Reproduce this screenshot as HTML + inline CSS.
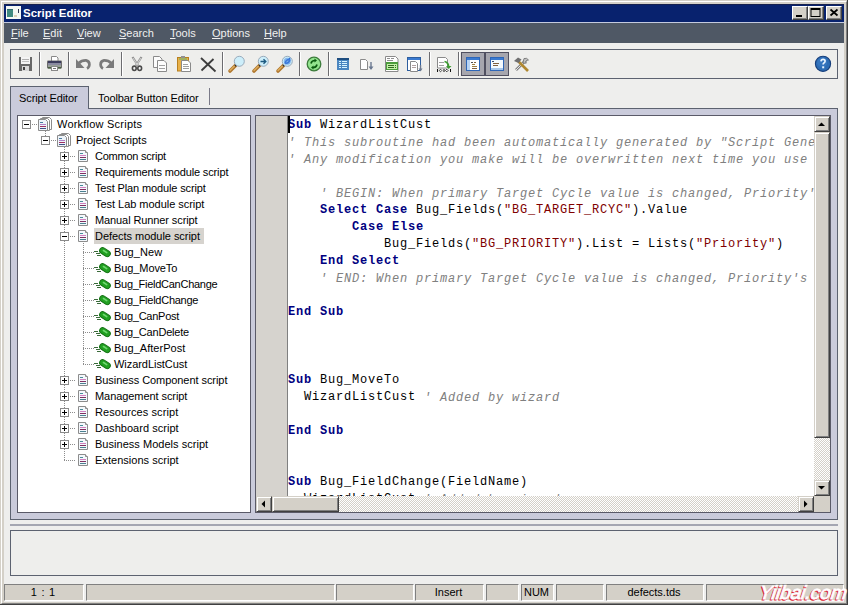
<!DOCTYPE html>
<html><head><meta charset="utf-8">
<style>
*{margin:0;padding:0;box-sizing:border-box}
html,body{width:848px;height:605px;overflow:hidden;background:#d4d0c8;font-family:"Liberation Sans",sans-serif;font-size:11px;color:#000}
.a{position:absolute}
#frame{left:0;top:0;width:848px;height:605px;background:#d4d0c8;border-right:1px solid #404040;border-bottom:1px solid #404040}
#frame2{left:1px;top:1px;width:846px;height:603px;border-top:1px solid #fff;border-left:1px solid #fff;border-right:1px solid #808080;border-bottom:1px solid #808080}
#win{left:4px;top:4px;width:840px;height:598px;background:#eeeeed}
#title{left:4px;top:4px;width:840px;height:18px;background:#08226e;border-top:1px solid #16214f}
#title .t{left:19px;top:2px;color:#fff;font-weight:bold;font-size:11.5px}
.tb{width:16px;height:14px;background:#d4d0c8;border-top:1px solid #fff;border-left:1px solid #fff;border-right:1px solid #404040;border-bottom:1px solid #404040;box-shadow:inset -1px -1px 0 #808080}
#menusep{left:4px;top:22px;width:840px;height:1px;background:#c4cade}
#menu{left:4px;top:23px;width:840px;height:20px;background:#4f5865}
#menu span{position:absolute;top:4px;color:#f0f0f0;font-size:11px;line-height:13px}
#menu u{text-decoration:underline;text-underline-offset:1px;text-decoration-thickness:1px}
#toolbar{left:10px;top:49px;width:828px;height:30px;border:1px solid #5c6270;background:#eeeeec}
.sep{position:absolute;width:2px;height:24px;top:52px;border-left:1px solid #6c6c70;border-right:1px solid #fff}
.pbtn{position:absolute;top:52px;width:24px;height:24px;background:#a6a6ae;border:1px solid #505060}
#tabsel{left:10px;top:86px;width:79px;height:23px;background:#cacbdb;border:1px solid #5c6270;border-bottom:none}
.tabt{position:absolute;font-size:11px;white-space:nowrap;letter-spacing:-0.1px}
#panel{left:10px;top:108px;width:828px;height:412px;background:#cacbdb;border:1px solid #5c6270}
#tree{left:17px;top:115px;width:234px;height:398px;background:#fff;border:1px solid #5a5a68}
#editor{left:255px;top:115px;width:576px;height:398px;background:#fff;border:1px solid #5a5a68}
#gutter{left:256px;top:116px;width:32px;height:380px;background:#d6d3ce;border-right:1px solid #808080}
#caret{left:288px;top:116px;width:2px;height:17px;background:#000}
#code{left:288px;top:117px;width:526px;height:379px;overflow:hidden;font-family:"Liberation Mono",monospace;font-size:12px;letter-spacing:0.8px;line-height:17px;white-space:pre;color:#000}
.k{color:#000080;font-weight:bold}
.c{color:#808080;font-style:italic;position:relative;top:1px}
.s{color:#800000}
.chk{background-color:#fff;background-image:linear-gradient(45deg,#d4d0c8 25%,transparent 25%,transparent 75%,#d4d0c8 75%),linear-gradient(45deg,#d4d0c8 25%,transparent 25%,transparent 75%,#d4d0c8 75%);background-size:2px 2px;background-position:0 0,1px 1px}
.btn3{position:absolute;background:#d4d0c8;border-top:1px solid #d4d0c8;border-left:1px solid #d4d0c8;border-right:1px solid #404040;border-bottom:1px solid #404040;box-shadow:inset 1px 1px 0 #fff,inset -1px -1px 0 #808080}
#split{left:10px;top:524px;width:828px;height:2px;background:#a4a6b2}
#output{left:10px;top:530px;width:828px;height:46px;background:#eeeeec;border:1px solid #5c6270}
.sp{position:absolute;top:584px;height:17px;background:#d4d0c8;border-top:1px solid #808080;border-left:1px solid #808080;border-right:1px solid #fff;border-bottom:1px solid #fff;text-align:center;font-size:11px;line-height:15px;padding-right:2px}
.row{position:absolute;height:16px;line-height:16px;font-size:11px;white-space:nowrap;letter-spacing:-0.2px}
.wm{font-size:19px;font-style:italic;white-space:nowrap;transform:skewX(-8deg);transform-origin:0 100%}
</style></head><body>
<div id="frame" class="a"></div>
<div id="frame2" class="a"></div>
<div id="win" class="a"></div>
<div id="title" class="a"><span class="a t">Script Editor</span></div>
<div class="a tb" style="left:792px;top:6px"></div>
<div class="a tb" style="left:808px;top:6px"></div>
<div class="a tb" style="left:826px;top:6px"></div>
<div id="menusep" class="a"></div>
<div id="menu" class="a">
<span style="left:7px"><u>F</u>ile</span>
<span style="left:39px"><u>E</u>dit</span>
<span style="left:73px"><u>V</u>iew</span>
<span style="left:115px"><u>S</u>earch</span>
<span style="left:166px"><u>T</u>ools</span>
<span style="left:208px"><u>O</u>ptions</span>
<span style="left:260px"><u>H</u>elp</span>
</div>
<div id="toolbar" class="a"></div>
<div class="sep" style="left:39px"></div>
<div class="sep" style="left:68px"></div>
<div class="sep" style="left:121px"></div>
<div class="sep" style="left:222px"></div>
<div class="sep" style="left:299px"></div>
<div class="sep" style="left:328px"></div>
<div class="sep" style="left:429px"></div>
<div class="sep" style="left:458px"></div>
<div class="pbtn" style="left:461px"></div>
<div class="pbtn" style="left:485px"></div>
<div id="panel" class="a"></div>
<div id="tabsel" class="a"></div>
<div class="tabt" style="left:19px;top:92px">Script Editor</div>
<div class="tabt" style="left:98px;top:92px">Toolbar Button Editor</div>
<div class="a" style="left:209px;top:88px;width:1px;height:17px;background:#7a7a88"></div>
<div id="tree" class="a"></div>
<div id="editor" class="a"></div>
<div id="gutter" class="a"></div>
<div id="code" class="a"><span class="k">Sub</span> WizardListCust
<span class="c">' This subroutine had been automatically generated by "Script Generator"</span>
<span class="c">' Any modification you make will be overwritten next time you use the wizard</span>

    <span class="c">' BEGIN: When primary Target Cycle value is changed, Priority's list is changed</span>
    <span class="k">Select Case</span> Bug_Fields(<span class="s">"BG_TARGET_RCYC"</span>).Value
        <span class="k">Case Else</span>
            Bug_Fields(<span class="s">"BG_PRIORITY"</span>).List = Lists(<span class="s">"Priority"</span>)
    <span class="k">End Select</span>
    <span class="c">' END: When primary Target Cycle value is changed, Priority's list is changed</span>

<span class="k">End Sub</span>



<span class="k">Sub</span> Bug_MoveTo
  WizardListCust <span class="c">' Added by wizard</span>

<span class="k">End Sub</span>


<span class="k">Sub</span> Bug_FieldChange(FieldName)
  WizardListCust <span class="c">' Added by wizard</span>
</div>
<div id="caret" class="a"></div>
<div class="a chk" style="left:814px;top:132px;width:16px;height:348px"></div>
<div class="btn3" style="left:814px;top:116px;width:16px;height:16px"></div>
<div class="btn3" style="left:814px;top:132px;width:16px;height:306px"></div>
<div class="btn3" style="left:814px;top:480px;width:16px;height:16px"></div>
<div class="a chk" style="left:256px;top:496px;width:558px;height:16px"></div>
<div class="btn3" style="left:256px;top:496px;width:16px;height:16px"></div>
<div class="btn3" style="left:272px;top:496px;width:67px;height:16px"></div>
<div class="btn3" style="left:798px;top:496px;width:16px;height:16px"></div>
<div class="a" style="left:814px;top:496px;width:16px;height:16px;background:#d4d0c8"></div>
<div id="split" class="a"></div>
<div id="output" class="a"></div>
<div class="sp" style="left:4px;width:80px"><span style="word-spacing:1.5px">1 : 1</span></div>
<div class="sp" style="left:86px;width:249px"></div>
<div class="sp" style="left:336px;width:78px"></div>
<div class="sp" style="left:415px;width:69px">Insert</div>
<div class="sp" style="left:486px;width:33px"></div>
<div class="sp" style="left:521px;width:33px">NUM</div>
<div class="sp" style="left:556px;width:48px"></div>
<div class="sp" style="left:606px;width:98px">defects.tds</div>
<div class="sp" style="left:706px;width:138px"></div>
<div class="a wm" style="left:757px;top:583px;color:#e02838;-webkit-text-stroke:1px #e02838">Yiibai.com</div>
<div class="a wm" style="left:758px;top:582px;color:#fff;-webkit-text-stroke:0.8px #fff">Yiibai.com</div>
<div class="row" style="left:57px;top:116px;letter-spacing:0.22px">Workflow Scripts</div>
<div class="row" style="left:76px;top:132px;letter-spacing:-0.02px">Project Scripts</div>
<div class="row" style="left:95px;top:148px;letter-spacing:-0.24px">Common script</div>
<div class="row" style="left:95px;top:164px;letter-spacing:-0.14px">Requirements module script</div>
<div class="row" style="left:95px;top:180px;letter-spacing:-0.13px">Test Plan module script</div>
<div class="row" style="left:95px;top:196px;letter-spacing:-0.03px">Test Lab module script</div>
<div class="row" style="left:95px;top:212px;letter-spacing:-0.10px">Manual Runner script</div>
<div class="a" style="left:94px;top:228px;width:110px;height:16px;background:#d6d3ce"></div>
<div class="row" style="left:95px;top:228px;letter-spacing:-0.04px">Defects module script</div>
<div class="row" style="left:114px;top:244px;letter-spacing:0.07px">Bug_New</div>
<div class="row" style="left:114px;top:260px;letter-spacing:-0.09px">Bug_MoveTo</div>
<div class="row" style="left:114px;top:276px;letter-spacing:-0.27px">Bug_FieldCanChange</div>
<div class="row" style="left:114px;top:292px;letter-spacing:-0.26px">Bug_FieldChange</div>
<div class="row" style="left:114px;top:308px;letter-spacing:-0.26px">Bug_CanPost</div>
<div class="row" style="left:114px;top:324px;letter-spacing:-0.21px">Bug_CanDelete</div>
<div class="row" style="left:114px;top:340px;letter-spacing:0.03px">Bug_AfterPost</div>
<div class="row" style="left:114px;top:356px;letter-spacing:-0.05px">WizardListCust</div>
<div class="row" style="left:95px;top:372px;letter-spacing:-0.06px">Business Component script</div>
<div class="row" style="left:95px;top:388px;letter-spacing:-0.07px">Management script</div>
<div class="row" style="left:95px;top:404px;letter-spacing:0.09px">Resources script</div>
<div class="row" style="left:95px;top:420px;letter-spacing:0.03px">Dashboard script</div>
<div class="row" style="left:95px;top:436px;letter-spacing:0.03px">Business Models script</div>
<div class="row" style="left:95px;top:452px;letter-spacing:0.03px">Extensions script</div>
<svg class="a" style="left:0;top:0" width="848" height="605" viewBox="0 0 848 605"><rect x="45" y="131" width="1" height="1" fill="#8c8c8c"/><rect x="45" y="133" width="1" height="1" fill="#8c8c8c"/><rect x="45" y="135" width="1" height="1" fill="#8c8c8c"/><rect x="64" y="147" width="1" height="1" fill="#8c8c8c"/><rect x="64" y="149" width="1" height="1" fill="#8c8c8c"/><rect x="64" y="151" width="1" height="1" fill="#8c8c8c"/><rect x="64" y="153" width="1" height="1" fill="#8c8c8c"/><rect x="64" y="155" width="1" height="1" fill="#8c8c8c"/><rect x="64" y="157" width="1" height="1" fill="#8c8c8c"/><rect x="64" y="159" width="1" height="1" fill="#8c8c8c"/><rect x="64" y="161" width="1" height="1" fill="#8c8c8c"/><rect x="64" y="163" width="1" height="1" fill="#8c8c8c"/><rect x="64" y="165" width="1" height="1" fill="#8c8c8c"/><rect x="64" y="167" width="1" height="1" fill="#8c8c8c"/><rect x="64" y="169" width="1" height="1" fill="#8c8c8c"/><rect x="64" y="171" width="1" height="1" fill="#8c8c8c"/><rect x="64" y="173" width="1" height="1" fill="#8c8c8c"/><rect x="64" y="175" width="1" height="1" fill="#8c8c8c"/><rect x="64" y="177" width="1" height="1" fill="#8c8c8c"/><rect x="64" y="179" width="1" height="1" fill="#8c8c8c"/><rect x="64" y="181" width="1" height="1" fill="#8c8c8c"/><rect x="64" y="183" width="1" height="1" fill="#8c8c8c"/><rect x="64" y="185" width="1" height="1" fill="#8c8c8c"/><rect x="64" y="187" width="1" height="1" fill="#8c8c8c"/><rect x="64" y="189" width="1" height="1" fill="#8c8c8c"/><rect x="64" y="191" width="1" height="1" fill="#8c8c8c"/><rect x="64" y="193" width="1" height="1" fill="#8c8c8c"/><rect x="64" y="195" width="1" height="1" fill="#8c8c8c"/><rect x="64" y="197" width="1" height="1" fill="#8c8c8c"/><rect x="64" y="199" width="1" height="1" fill="#8c8c8c"/><rect x="64" y="201" width="1" height="1" fill="#8c8c8c"/><rect x="64" y="203" width="1" height="1" fill="#8c8c8c"/><rect x="64" y="205" width="1" height="1" fill="#8c8c8c"/><rect x="64" y="207" width="1" height="1" fill="#8c8c8c"/><rect x="64" y="209" width="1" height="1" fill="#8c8c8c"/><rect x="64" y="211" width="1" height="1" fill="#8c8c8c"/><rect x="64" y="213" width="1" height="1" fill="#8c8c8c"/><rect x="64" y="215" width="1" height="1" fill="#8c8c8c"/><rect x="64" y="217" width="1" height="1" fill="#8c8c8c"/><rect x="64" y="219" width="1" height="1" fill="#8c8c8c"/><rect x="64" y="221" width="1" height="1" fill="#8c8c8c"/><rect x="64" y="223" width="1" height="1" fill="#8c8c8c"/><rect x="64" y="225" width="1" height="1" fill="#8c8c8c"/><rect x="64" y="227" width="1" height="1" fill="#8c8c8c"/><rect x="64" y="229" width="1" height="1" fill="#8c8c8c"/><rect x="64" y="231" width="1" height="1" fill="#8c8c8c"/><rect x="64" y="233" width="1" height="1" fill="#8c8c8c"/><rect x="64" y="235" width="1" height="1" fill="#8c8c8c"/><rect x="64" y="237" width="1" height="1" fill="#8c8c8c"/><rect x="64" y="239" width="1" height="1" fill="#8c8c8c"/><rect x="64" y="241" width="1" height="1" fill="#8c8c8c"/><rect x="64" y="243" width="1" height="1" fill="#8c8c8c"/><rect x="64" y="245" width="1" height="1" fill="#8c8c8c"/><rect x="64" y="247" width="1" height="1" fill="#8c8c8c"/><rect x="64" y="249" width="1" height="1" fill="#8c8c8c"/><rect x="64" y="251" width="1" height="1" fill="#8c8c8c"/><rect x="64" y="253" width="1" height="1" fill="#8c8c8c"/><rect x="64" y="255" width="1" height="1" fill="#8c8c8c"/><rect x="64" y="257" width="1" height="1" fill="#8c8c8c"/><rect x="64" y="259" width="1" height="1" fill="#8c8c8c"/><rect x="64" y="261" width="1" height="1" fill="#8c8c8c"/><rect x="64" y="263" width="1" height="1" fill="#8c8c8c"/><rect x="64" y="265" width="1" height="1" fill="#8c8c8c"/><rect x="64" y="267" width="1" height="1" fill="#8c8c8c"/><rect x="64" y="269" width="1" height="1" fill="#8c8c8c"/><rect x="64" y="271" width="1" height="1" fill="#8c8c8c"/><rect x="64" y="273" width="1" height="1" fill="#8c8c8c"/><rect x="64" y="275" width="1" height="1" fill="#8c8c8c"/><rect x="64" y="277" width="1" height="1" fill="#8c8c8c"/><rect x="64" y="279" width="1" height="1" fill="#8c8c8c"/><rect x="64" y="281" width="1" height="1" fill="#8c8c8c"/><rect x="64" y="283" width="1" height="1" fill="#8c8c8c"/><rect x="64" y="285" width="1" height="1" fill="#8c8c8c"/><rect x="64" y="287" width="1" height="1" fill="#8c8c8c"/><rect x="64" y="289" width="1" height="1" fill="#8c8c8c"/><rect x="64" y="291" width="1" height="1" fill="#8c8c8c"/><rect x="64" y="293" width="1" height="1" fill="#8c8c8c"/><rect x="64" y="295" width="1" height="1" fill="#8c8c8c"/><rect x="64" y="297" width="1" height="1" fill="#8c8c8c"/><rect x="64" y="299" width="1" height="1" fill="#8c8c8c"/><rect x="64" y="301" width="1" height="1" fill="#8c8c8c"/><rect x="64" y="303" width="1" height="1" fill="#8c8c8c"/><rect x="64" y="305" width="1" height="1" fill="#8c8c8c"/><rect x="64" y="307" width="1" height="1" fill="#8c8c8c"/><rect x="64" y="309" width="1" height="1" fill="#8c8c8c"/><rect x="64" y="311" width="1" height="1" fill="#8c8c8c"/><rect x="64" y="313" width="1" height="1" fill="#8c8c8c"/><rect x="64" y="315" width="1" height="1" fill="#8c8c8c"/><rect x="64" y="317" width="1" height="1" fill="#8c8c8c"/><rect x="64" y="319" width="1" height="1" fill="#8c8c8c"/><rect x="64" y="321" width="1" height="1" fill="#8c8c8c"/><rect x="64" y="323" width="1" height="1" fill="#8c8c8c"/><rect x="64" y="325" width="1" height="1" fill="#8c8c8c"/><rect x="64" y="327" width="1" height="1" fill="#8c8c8c"/><rect x="64" y="329" width="1" height="1" fill="#8c8c8c"/><rect x="64" y="331" width="1" height="1" fill="#8c8c8c"/><rect x="64" y="333" width="1" height="1" fill="#8c8c8c"/><rect x="64" y="335" width="1" height="1" fill="#8c8c8c"/><rect x="64" y="337" width="1" height="1" fill="#8c8c8c"/><rect x="64" y="339" width="1" height="1" fill="#8c8c8c"/><rect x="64" y="341" width="1" height="1" fill="#8c8c8c"/><rect x="64" y="343" width="1" height="1" fill="#8c8c8c"/><rect x="64" y="345" width="1" height="1" fill="#8c8c8c"/><rect x="64" y="347" width="1" height="1" fill="#8c8c8c"/><rect x="64" y="349" width="1" height="1" fill="#8c8c8c"/><rect x="64" y="351" width="1" height="1" fill="#8c8c8c"/><rect x="64" y="353" width="1" height="1" fill="#8c8c8c"/><rect x="64" y="355" width="1" height="1" fill="#8c8c8c"/><rect x="64" y="357" width="1" height="1" fill="#8c8c8c"/><rect x="64" y="359" width="1" height="1" fill="#8c8c8c"/><rect x="64" y="361" width="1" height="1" fill="#8c8c8c"/><rect x="64" y="363" width="1" height="1" fill="#8c8c8c"/><rect x="64" y="365" width="1" height="1" fill="#8c8c8c"/><rect x="64" y="367" width="1" height="1" fill="#8c8c8c"/><rect x="64" y="369" width="1" height="1" fill="#8c8c8c"/><rect x="64" y="371" width="1" height="1" fill="#8c8c8c"/><rect x="64" y="373" width="1" height="1" fill="#8c8c8c"/><rect x="64" y="375" width="1" height="1" fill="#8c8c8c"/><rect x="64" y="377" width="1" height="1" fill="#8c8c8c"/><rect x="64" y="379" width="1" height="1" fill="#8c8c8c"/><rect x="64" y="381" width="1" height="1" fill="#8c8c8c"/><rect x="64" y="383" width="1" height="1" fill="#8c8c8c"/><rect x="64" y="385" width="1" height="1" fill="#8c8c8c"/><rect x="64" y="387" width="1" height="1" fill="#8c8c8c"/><rect x="64" y="389" width="1" height="1" fill="#8c8c8c"/><rect x="64" y="391" width="1" height="1" fill="#8c8c8c"/><rect x="64" y="393" width="1" height="1" fill="#8c8c8c"/><rect x="64" y="395" width="1" height="1" fill="#8c8c8c"/><rect x="64" y="397" width="1" height="1" fill="#8c8c8c"/><rect x="64" y="399" width="1" height="1" fill="#8c8c8c"/><rect x="64" y="401" width="1" height="1" fill="#8c8c8c"/><rect x="64" y="403" width="1" height="1" fill="#8c8c8c"/><rect x="64" y="405" width="1" height="1" fill="#8c8c8c"/><rect x="64" y="407" width="1" height="1" fill="#8c8c8c"/><rect x="64" y="409" width="1" height="1" fill="#8c8c8c"/><rect x="64" y="411" width="1" height="1" fill="#8c8c8c"/><rect x="64" y="413" width="1" height="1" fill="#8c8c8c"/><rect x="64" y="415" width="1" height="1" fill="#8c8c8c"/><rect x="64" y="417" width="1" height="1" fill="#8c8c8c"/><rect x="64" y="419" width="1" height="1" fill="#8c8c8c"/><rect x="64" y="421" width="1" height="1" fill="#8c8c8c"/><rect x="64" y="423" width="1" height="1" fill="#8c8c8c"/><rect x="64" y="425" width="1" height="1" fill="#8c8c8c"/><rect x="64" y="427" width="1" height="1" fill="#8c8c8c"/><rect x="64" y="429" width="1" height="1" fill="#8c8c8c"/><rect x="64" y="431" width="1" height="1" fill="#8c8c8c"/><rect x="64" y="433" width="1" height="1" fill="#8c8c8c"/><rect x="64" y="435" width="1" height="1" fill="#8c8c8c"/><rect x="64" y="437" width="1" height="1" fill="#8c8c8c"/><rect x="64" y="439" width="1" height="1" fill="#8c8c8c"/><rect x="64" y="441" width="1" height="1" fill="#8c8c8c"/><rect x="64" y="443" width="1" height="1" fill="#8c8c8c"/><rect x="64" y="445" width="1" height="1" fill="#8c8c8c"/><rect x="64" y="447" width="1" height="1" fill="#8c8c8c"/><rect x="64" y="449" width="1" height="1" fill="#8c8c8c"/><rect x="64" y="451" width="1" height="1" fill="#8c8c8c"/><rect x="64" y="453" width="1" height="1" fill="#8c8c8c"/><rect x="64" y="455" width="1" height="1" fill="#8c8c8c"/><rect x="64" y="457" width="1" height="1" fill="#8c8c8c"/><rect x="64" y="459" width="1" height="1" fill="#8c8c8c"/><rect x="83" y="243" width="1" height="1" fill="#8c8c8c"/><rect x="83" y="245" width="1" height="1" fill="#8c8c8c"/><rect x="83" y="247" width="1" height="1" fill="#8c8c8c"/><rect x="83" y="249" width="1" height="1" fill="#8c8c8c"/><rect x="83" y="251" width="1" height="1" fill="#8c8c8c"/><rect x="83" y="253" width="1" height="1" fill="#8c8c8c"/><rect x="83" y="255" width="1" height="1" fill="#8c8c8c"/><rect x="83" y="257" width="1" height="1" fill="#8c8c8c"/><rect x="83" y="259" width="1" height="1" fill="#8c8c8c"/><rect x="83" y="261" width="1" height="1" fill="#8c8c8c"/><rect x="83" y="263" width="1" height="1" fill="#8c8c8c"/><rect x="83" y="265" width="1" height="1" fill="#8c8c8c"/><rect x="83" y="267" width="1" height="1" fill="#8c8c8c"/><rect x="83" y="269" width="1" height="1" fill="#8c8c8c"/><rect x="83" y="271" width="1" height="1" fill="#8c8c8c"/><rect x="83" y="273" width="1" height="1" fill="#8c8c8c"/><rect x="83" y="275" width="1" height="1" fill="#8c8c8c"/><rect x="83" y="277" width="1" height="1" fill="#8c8c8c"/><rect x="83" y="279" width="1" height="1" fill="#8c8c8c"/><rect x="83" y="281" width="1" height="1" fill="#8c8c8c"/><rect x="83" y="283" width="1" height="1" fill="#8c8c8c"/><rect x="83" y="285" width="1" height="1" fill="#8c8c8c"/><rect x="83" y="287" width="1" height="1" fill="#8c8c8c"/><rect x="83" y="289" width="1" height="1" fill="#8c8c8c"/><rect x="83" y="291" width="1" height="1" fill="#8c8c8c"/><rect x="83" y="293" width="1" height="1" fill="#8c8c8c"/><rect x="83" y="295" width="1" height="1" fill="#8c8c8c"/><rect x="83" y="297" width="1" height="1" fill="#8c8c8c"/><rect x="83" y="299" width="1" height="1" fill="#8c8c8c"/><rect x="83" y="301" width="1" height="1" fill="#8c8c8c"/><rect x="83" y="303" width="1" height="1" fill="#8c8c8c"/><rect x="83" y="305" width="1" height="1" fill="#8c8c8c"/><rect x="83" y="307" width="1" height="1" fill="#8c8c8c"/><rect x="83" y="309" width="1" height="1" fill="#8c8c8c"/><rect x="83" y="311" width="1" height="1" fill="#8c8c8c"/><rect x="83" y="313" width="1" height="1" fill="#8c8c8c"/><rect x="83" y="315" width="1" height="1" fill="#8c8c8c"/><rect x="83" y="317" width="1" height="1" fill="#8c8c8c"/><rect x="83" y="319" width="1" height="1" fill="#8c8c8c"/><rect x="83" y="321" width="1" height="1" fill="#8c8c8c"/><rect x="83" y="323" width="1" height="1" fill="#8c8c8c"/><rect x="83" y="325" width="1" height="1" fill="#8c8c8c"/><rect x="83" y="327" width="1" height="1" fill="#8c8c8c"/><rect x="83" y="329" width="1" height="1" fill="#8c8c8c"/><rect x="83" y="331" width="1" height="1" fill="#8c8c8c"/><rect x="83" y="333" width="1" height="1" fill="#8c8c8c"/><rect x="83" y="335" width="1" height="1" fill="#8c8c8c"/><rect x="83" y="337" width="1" height="1" fill="#8c8c8c"/><rect x="83" y="339" width="1" height="1" fill="#8c8c8c"/><rect x="83" y="341" width="1" height="1" fill="#8c8c8c"/><rect x="83" y="343" width="1" height="1" fill="#8c8c8c"/><rect x="83" y="345" width="1" height="1" fill="#8c8c8c"/><rect x="83" y="347" width="1" height="1" fill="#8c8c8c"/><rect x="83" y="349" width="1" height="1" fill="#8c8c8c"/><rect x="83" y="351" width="1" height="1" fill="#8c8c8c"/><rect x="83" y="353" width="1" height="1" fill="#8c8c8c"/><rect x="83" y="355" width="1" height="1" fill="#8c8c8c"/><rect x="83" y="357" width="1" height="1" fill="#8c8c8c"/><rect x="83" y="359" width="1" height="1" fill="#8c8c8c"/><rect x="83" y="361" width="1" height="1" fill="#8c8c8c"/><rect x="83" y="363" width="1" height="1" fill="#8c8c8c"/><rect x="32" y="124" width="1" height="1" fill="#8c8c8c"/><rect x="34" y="124" width="1" height="1" fill="#8c8c8c"/><rect x="36" y="124" width="1" height="1" fill="#8c8c8c"/><rect x="22.5" y="120.5" width="8" height="8" fill="#fff" stroke="#8a8a8a" stroke-width="1"/><rect x="24" y="124" width="5" height="1" fill="#000"/><g transform="translate(37,116)"><path d="M5.5 1.5h7l2 2v10h-9z" fill="#fff" stroke="#8c8c8c"/>
<path d="M3.5 2.5h7l2 2v10h-9z" fill="#fff" stroke="#8c8c8c"/>
<path d="M1.5 3.5h7l2 2v9h-9z" fill="#eef4fa" stroke="#8c8c8c"/>
<rect x="3" y="6" width="3" height="1" fill="#4a7aa0"/>
<rect x="3" y="8" width="6" height="1" fill="#b080c8"/>
<rect x="3" y="10" width="6" height="1" fill="#a03060"/>
<rect x="3" y="12" width="6" height="1" fill="#405088"/></g><rect x="51" y="140" width="1" height="1" fill="#8c8c8c"/><rect x="53" y="140" width="1" height="1" fill="#8c8c8c"/><rect x="55" y="140" width="1" height="1" fill="#8c8c8c"/><rect x="41.5" y="136.5" width="8" height="8" fill="#fff" stroke="#8a8a8a" stroke-width="1"/><rect x="43" y="140" width="5" height="1" fill="#000"/><g transform="translate(56,132)"><path d="M5.5 1.5h7l2 2v10h-9z" fill="#fff" stroke="#8c8c8c"/>
<path d="M3.5 2.5h7l2 2v10h-9z" fill="#fff" stroke="#8c8c8c"/>
<path d="M1.5 3.5h7l2 2v9h-9z" fill="#eef4fa" stroke="#8c8c8c"/>
<rect x="3" y="6" width="3" height="1" fill="#4a7aa0"/>
<rect x="3" y="8" width="6" height="1" fill="#b080c8"/>
<rect x="3" y="10" width="6" height="1" fill="#a03060"/>
<rect x="3" y="12" width="6" height="1" fill="#405088"/></g><rect x="70" y="156" width="1" height="1" fill="#8c8c8c"/><rect x="72" y="156" width="1" height="1" fill="#8c8c8c"/><rect x="74" y="156" width="1" height="1" fill="#8c8c8c"/><rect x="60.5" y="152.5" width="8" height="8" fill="#fff" stroke="#8a8a8a" stroke-width="1"/><rect x="62" y="156" width="5" height="1" fill="#000"/><rect x="64" y="154" width="1" height="5" fill="#000"/><g transform="translate(75,148)"><path d="M3.5 2.5h7l2 2v9h-9z" fill="#f4f8fc" stroke="#8c8c8c"/>
<path d="M10.5 2.5v2h2" fill="#fff" stroke="#8c8c8c"/>
<rect x="5" y="5" width="3" height="1" fill="#4a8a9a"/>
<rect x="5" y="7" width="6" height="1" fill="#d080c0"/>
<rect x="5" y="9" width="6" height="1" fill="#803060"/>
<rect x="5" y="11" width="6" height="1" fill="#4a8090"/></g><rect x="70" y="172" width="1" height="1" fill="#8c8c8c"/><rect x="72" y="172" width="1" height="1" fill="#8c8c8c"/><rect x="74" y="172" width="1" height="1" fill="#8c8c8c"/><rect x="60.5" y="168.5" width="8" height="8" fill="#fff" stroke="#8a8a8a" stroke-width="1"/><rect x="62" y="172" width="5" height="1" fill="#000"/><rect x="64" y="170" width="1" height="5" fill="#000"/><g transform="translate(75,164)"><path d="M3.5 2.5h7l2 2v9h-9z" fill="#f4f8fc" stroke="#8c8c8c"/>
<path d="M10.5 2.5v2h2" fill="#fff" stroke="#8c8c8c"/>
<rect x="5" y="5" width="3" height="1" fill="#4a8a9a"/>
<rect x="5" y="7" width="6" height="1" fill="#d080c0"/>
<rect x="5" y="9" width="6" height="1" fill="#803060"/>
<rect x="5" y="11" width="6" height="1" fill="#4a8090"/></g><rect x="70" y="188" width="1" height="1" fill="#8c8c8c"/><rect x="72" y="188" width="1" height="1" fill="#8c8c8c"/><rect x="74" y="188" width="1" height="1" fill="#8c8c8c"/><rect x="60.5" y="184.5" width="8" height="8" fill="#fff" stroke="#8a8a8a" stroke-width="1"/><rect x="62" y="188" width="5" height="1" fill="#000"/><rect x="64" y="186" width="1" height="5" fill="#000"/><g transform="translate(75,180)"><path d="M3.5 2.5h7l2 2v9h-9z" fill="#f4f8fc" stroke="#8c8c8c"/>
<path d="M10.5 2.5v2h2" fill="#fff" stroke="#8c8c8c"/>
<rect x="5" y="5" width="3" height="1" fill="#4a8a9a"/>
<rect x="5" y="7" width="6" height="1" fill="#d080c0"/>
<rect x="5" y="9" width="6" height="1" fill="#803060"/>
<rect x="5" y="11" width="6" height="1" fill="#4a8090"/></g><rect x="70" y="204" width="1" height="1" fill="#8c8c8c"/><rect x="72" y="204" width="1" height="1" fill="#8c8c8c"/><rect x="74" y="204" width="1" height="1" fill="#8c8c8c"/><rect x="60.5" y="200.5" width="8" height="8" fill="#fff" stroke="#8a8a8a" stroke-width="1"/><rect x="62" y="204" width="5" height="1" fill="#000"/><rect x="64" y="202" width="1" height="5" fill="#000"/><g transform="translate(75,196)"><path d="M3.5 2.5h7l2 2v9h-9z" fill="#f4f8fc" stroke="#8c8c8c"/>
<path d="M10.5 2.5v2h2" fill="#fff" stroke="#8c8c8c"/>
<rect x="5" y="5" width="3" height="1" fill="#4a8a9a"/>
<rect x="5" y="7" width="6" height="1" fill="#d080c0"/>
<rect x="5" y="9" width="6" height="1" fill="#803060"/>
<rect x="5" y="11" width="6" height="1" fill="#4a8090"/></g><rect x="70" y="220" width="1" height="1" fill="#8c8c8c"/><rect x="72" y="220" width="1" height="1" fill="#8c8c8c"/><rect x="74" y="220" width="1" height="1" fill="#8c8c8c"/><rect x="60.5" y="216.5" width="8" height="8" fill="#fff" stroke="#8a8a8a" stroke-width="1"/><rect x="62" y="220" width="5" height="1" fill="#000"/><rect x="64" y="218" width="1" height="5" fill="#000"/><g transform="translate(75,212)"><path d="M3.5 2.5h7l2 2v9h-9z" fill="#f4f8fc" stroke="#8c8c8c"/>
<path d="M10.5 2.5v2h2" fill="#fff" stroke="#8c8c8c"/>
<rect x="5" y="5" width="3" height="1" fill="#4a8a9a"/>
<rect x="5" y="7" width="6" height="1" fill="#d080c0"/>
<rect x="5" y="9" width="6" height="1" fill="#803060"/>
<rect x="5" y="11" width="6" height="1" fill="#4a8090"/></g><rect x="70" y="236" width="1" height="1" fill="#8c8c8c"/><rect x="72" y="236" width="1" height="1" fill="#8c8c8c"/><rect x="74" y="236" width="1" height="1" fill="#8c8c8c"/><rect x="60.5" y="232.5" width="8" height="8" fill="#fff" stroke="#8a8a8a" stroke-width="1"/><rect x="62" y="236" width="5" height="1" fill="#000"/><g transform="translate(75,228)"><path d="M3.5 2.5h7l2 2v9h-9z" fill="#f4f8fc" stroke="#8c8c8c"/>
<path d="M10.5 2.5v2h2" fill="#fff" stroke="#8c8c8c"/>
<rect x="5" y="5" width="3" height="1" fill="#4a8a9a"/>
<rect x="5" y="7" width="6" height="1" fill="#d080c0"/>
<rect x="5" y="9" width="6" height="1" fill="#803060"/>
<rect x="5" y="11" width="6" height="1" fill="#4a8090"/></g><rect x="83" y="252" width="1" height="1" fill="#8c8c8c"/><rect x="85" y="252" width="1" height="1" fill="#8c8c8c"/><rect x="87" y="252" width="1" height="1" fill="#8c8c8c"/><rect x="89" y="252" width="1" height="1" fill="#8c8c8c"/><rect x="91" y="252" width="1" height="1" fill="#8c8c8c"/><rect x="93" y="252" width="1" height="1" fill="#8c8c8c"/><g transform="translate(94,244)"><rect x="0" y="7" width="4" height="1" fill="#3a6a3a"/>
<rect x="2" y="9" width="4" height="1" fill="#3a6a3a"/>
<rect x="3" y="11" width="4" height="1" fill="#3a6a3a"/>
<rect x="5.2" y="5.2" width="11.5" height="6" rx="3" transform="rotate(33 11 8.2)" fill="#22a022" stroke="#127012" stroke-width="1"/>
<rect x="8" y="6.8" width="5.5" height="1.6" rx="0.8" transform="rotate(33 11 8.2)" fill="#70d870"/></g><rect x="83" y="268" width="1" height="1" fill="#8c8c8c"/><rect x="85" y="268" width="1" height="1" fill="#8c8c8c"/><rect x="87" y="268" width="1" height="1" fill="#8c8c8c"/><rect x="89" y="268" width="1" height="1" fill="#8c8c8c"/><rect x="91" y="268" width="1" height="1" fill="#8c8c8c"/><rect x="93" y="268" width="1" height="1" fill="#8c8c8c"/><g transform="translate(94,260)"><rect x="0" y="7" width="4" height="1" fill="#3a6a3a"/>
<rect x="2" y="9" width="4" height="1" fill="#3a6a3a"/>
<rect x="3" y="11" width="4" height="1" fill="#3a6a3a"/>
<rect x="5.2" y="5.2" width="11.5" height="6" rx="3" transform="rotate(33 11 8.2)" fill="#22a022" stroke="#127012" stroke-width="1"/>
<rect x="8" y="6.8" width="5.5" height="1.6" rx="0.8" transform="rotate(33 11 8.2)" fill="#70d870"/></g><rect x="83" y="284" width="1" height="1" fill="#8c8c8c"/><rect x="85" y="284" width="1" height="1" fill="#8c8c8c"/><rect x="87" y="284" width="1" height="1" fill="#8c8c8c"/><rect x="89" y="284" width="1" height="1" fill="#8c8c8c"/><rect x="91" y="284" width="1" height="1" fill="#8c8c8c"/><rect x="93" y="284" width="1" height="1" fill="#8c8c8c"/><g transform="translate(94,276)"><rect x="0" y="7" width="4" height="1" fill="#3a6a3a"/>
<rect x="2" y="9" width="4" height="1" fill="#3a6a3a"/>
<rect x="3" y="11" width="4" height="1" fill="#3a6a3a"/>
<rect x="5.2" y="5.2" width="11.5" height="6" rx="3" transform="rotate(33 11 8.2)" fill="#22a022" stroke="#127012" stroke-width="1"/>
<rect x="8" y="6.8" width="5.5" height="1.6" rx="0.8" transform="rotate(33 11 8.2)" fill="#70d870"/></g><rect x="83" y="300" width="1" height="1" fill="#8c8c8c"/><rect x="85" y="300" width="1" height="1" fill="#8c8c8c"/><rect x="87" y="300" width="1" height="1" fill="#8c8c8c"/><rect x="89" y="300" width="1" height="1" fill="#8c8c8c"/><rect x="91" y="300" width="1" height="1" fill="#8c8c8c"/><rect x="93" y="300" width="1" height="1" fill="#8c8c8c"/><g transform="translate(94,292)"><rect x="0" y="7" width="4" height="1" fill="#3a6a3a"/>
<rect x="2" y="9" width="4" height="1" fill="#3a6a3a"/>
<rect x="3" y="11" width="4" height="1" fill="#3a6a3a"/>
<rect x="5.2" y="5.2" width="11.5" height="6" rx="3" transform="rotate(33 11 8.2)" fill="#22a022" stroke="#127012" stroke-width="1"/>
<rect x="8" y="6.8" width="5.5" height="1.6" rx="0.8" transform="rotate(33 11 8.2)" fill="#70d870"/></g><rect x="83" y="316" width="1" height="1" fill="#8c8c8c"/><rect x="85" y="316" width="1" height="1" fill="#8c8c8c"/><rect x="87" y="316" width="1" height="1" fill="#8c8c8c"/><rect x="89" y="316" width="1" height="1" fill="#8c8c8c"/><rect x="91" y="316" width="1" height="1" fill="#8c8c8c"/><rect x="93" y="316" width="1" height="1" fill="#8c8c8c"/><g transform="translate(94,308)"><rect x="0" y="7" width="4" height="1" fill="#3a6a3a"/>
<rect x="2" y="9" width="4" height="1" fill="#3a6a3a"/>
<rect x="3" y="11" width="4" height="1" fill="#3a6a3a"/>
<rect x="5.2" y="5.2" width="11.5" height="6" rx="3" transform="rotate(33 11 8.2)" fill="#22a022" stroke="#127012" stroke-width="1"/>
<rect x="8" y="6.8" width="5.5" height="1.6" rx="0.8" transform="rotate(33 11 8.2)" fill="#70d870"/></g><rect x="83" y="332" width="1" height="1" fill="#8c8c8c"/><rect x="85" y="332" width="1" height="1" fill="#8c8c8c"/><rect x="87" y="332" width="1" height="1" fill="#8c8c8c"/><rect x="89" y="332" width="1" height="1" fill="#8c8c8c"/><rect x="91" y="332" width="1" height="1" fill="#8c8c8c"/><rect x="93" y="332" width="1" height="1" fill="#8c8c8c"/><g transform="translate(94,324)"><rect x="0" y="7" width="4" height="1" fill="#3a6a3a"/>
<rect x="2" y="9" width="4" height="1" fill="#3a6a3a"/>
<rect x="3" y="11" width="4" height="1" fill="#3a6a3a"/>
<rect x="5.2" y="5.2" width="11.5" height="6" rx="3" transform="rotate(33 11 8.2)" fill="#22a022" stroke="#127012" stroke-width="1"/>
<rect x="8" y="6.8" width="5.5" height="1.6" rx="0.8" transform="rotate(33 11 8.2)" fill="#70d870"/></g><rect x="83" y="348" width="1" height="1" fill="#8c8c8c"/><rect x="85" y="348" width="1" height="1" fill="#8c8c8c"/><rect x="87" y="348" width="1" height="1" fill="#8c8c8c"/><rect x="89" y="348" width="1" height="1" fill="#8c8c8c"/><rect x="91" y="348" width="1" height="1" fill="#8c8c8c"/><rect x="93" y="348" width="1" height="1" fill="#8c8c8c"/><g transform="translate(94,340)"><rect x="0" y="7" width="4" height="1" fill="#3a6a3a"/>
<rect x="2" y="9" width="4" height="1" fill="#3a6a3a"/>
<rect x="3" y="11" width="4" height="1" fill="#3a6a3a"/>
<rect x="5.2" y="5.2" width="11.5" height="6" rx="3" transform="rotate(33 11 8.2)" fill="#22a022" stroke="#127012" stroke-width="1"/>
<rect x="8" y="6.8" width="5.5" height="1.6" rx="0.8" transform="rotate(33 11 8.2)" fill="#70d870"/></g><rect x="83" y="364" width="1" height="1" fill="#8c8c8c"/><rect x="85" y="364" width="1" height="1" fill="#8c8c8c"/><rect x="87" y="364" width="1" height="1" fill="#8c8c8c"/><rect x="89" y="364" width="1" height="1" fill="#8c8c8c"/><rect x="91" y="364" width="1" height="1" fill="#8c8c8c"/><rect x="93" y="364" width="1" height="1" fill="#8c8c8c"/><g transform="translate(94,356)"><rect x="0" y="7" width="4" height="1" fill="#3a6a3a"/>
<rect x="2" y="9" width="4" height="1" fill="#3a6a3a"/>
<rect x="3" y="11" width="4" height="1" fill="#3a6a3a"/>
<rect x="5.2" y="5.2" width="11.5" height="6" rx="3" transform="rotate(33 11 8.2)" fill="#22a022" stroke="#127012" stroke-width="1"/>
<rect x="8" y="6.8" width="5.5" height="1.6" rx="0.8" transform="rotate(33 11 8.2)" fill="#70d870"/></g><rect x="70" y="380" width="1" height="1" fill="#8c8c8c"/><rect x="72" y="380" width="1" height="1" fill="#8c8c8c"/><rect x="74" y="380" width="1" height="1" fill="#8c8c8c"/><rect x="60.5" y="376.5" width="8" height="8" fill="#fff" stroke="#8a8a8a" stroke-width="1"/><rect x="62" y="380" width="5" height="1" fill="#000"/><rect x="64" y="378" width="1" height="5" fill="#000"/><g transform="translate(75,372)"><path d="M3.5 2.5h7l2 2v9h-9z" fill="#f4f8fc" stroke="#8c8c8c"/>
<path d="M10.5 2.5v2h2" fill="#fff" stroke="#8c8c8c"/>
<rect x="5" y="5" width="3" height="1" fill="#4a8a9a"/>
<rect x="5" y="7" width="6" height="1" fill="#d080c0"/>
<rect x="5" y="9" width="6" height="1" fill="#803060"/>
<rect x="5" y="11" width="6" height="1" fill="#4a8090"/></g><rect x="70" y="396" width="1" height="1" fill="#8c8c8c"/><rect x="72" y="396" width="1" height="1" fill="#8c8c8c"/><rect x="74" y="396" width="1" height="1" fill="#8c8c8c"/><rect x="60.5" y="392.5" width="8" height="8" fill="#fff" stroke="#8a8a8a" stroke-width="1"/><rect x="62" y="396" width="5" height="1" fill="#000"/><rect x="64" y="394" width="1" height="5" fill="#000"/><g transform="translate(75,388)"><path d="M3.5 2.5h7l2 2v9h-9z" fill="#f4f8fc" stroke="#8c8c8c"/>
<path d="M10.5 2.5v2h2" fill="#fff" stroke="#8c8c8c"/>
<rect x="5" y="5" width="3" height="1" fill="#4a8a9a"/>
<rect x="5" y="7" width="6" height="1" fill="#d080c0"/>
<rect x="5" y="9" width="6" height="1" fill="#803060"/>
<rect x="5" y="11" width="6" height="1" fill="#4a8090"/></g><rect x="70" y="412" width="1" height="1" fill="#8c8c8c"/><rect x="72" y="412" width="1" height="1" fill="#8c8c8c"/><rect x="74" y="412" width="1" height="1" fill="#8c8c8c"/><rect x="60.5" y="408.5" width="8" height="8" fill="#fff" stroke="#8a8a8a" stroke-width="1"/><rect x="62" y="412" width="5" height="1" fill="#000"/><rect x="64" y="410" width="1" height="5" fill="#000"/><g transform="translate(75,404)"><path d="M3.5 2.5h7l2 2v9h-9z" fill="#f4f8fc" stroke="#8c8c8c"/>
<path d="M10.5 2.5v2h2" fill="#fff" stroke="#8c8c8c"/>
<rect x="5" y="5" width="3" height="1" fill="#4a8a9a"/>
<rect x="5" y="7" width="6" height="1" fill="#d080c0"/>
<rect x="5" y="9" width="6" height="1" fill="#803060"/>
<rect x="5" y="11" width="6" height="1" fill="#4a8090"/></g><rect x="70" y="428" width="1" height="1" fill="#8c8c8c"/><rect x="72" y="428" width="1" height="1" fill="#8c8c8c"/><rect x="74" y="428" width="1" height="1" fill="#8c8c8c"/><rect x="60.5" y="424.5" width="8" height="8" fill="#fff" stroke="#8a8a8a" stroke-width="1"/><rect x="62" y="428" width="5" height="1" fill="#000"/><rect x="64" y="426" width="1" height="5" fill="#000"/><g transform="translate(75,420)"><path d="M3.5 2.5h7l2 2v9h-9z" fill="#f4f8fc" stroke="#8c8c8c"/>
<path d="M10.5 2.5v2h2" fill="#fff" stroke="#8c8c8c"/>
<rect x="5" y="5" width="3" height="1" fill="#4a8a9a"/>
<rect x="5" y="7" width="6" height="1" fill="#d080c0"/>
<rect x="5" y="9" width="6" height="1" fill="#803060"/>
<rect x="5" y="11" width="6" height="1" fill="#4a8090"/></g><rect x="70" y="444" width="1" height="1" fill="#8c8c8c"/><rect x="72" y="444" width="1" height="1" fill="#8c8c8c"/><rect x="74" y="444" width="1" height="1" fill="#8c8c8c"/><rect x="60.5" y="440.5" width="8" height="8" fill="#fff" stroke="#8a8a8a" stroke-width="1"/><rect x="62" y="444" width="5" height="1" fill="#000"/><rect x="64" y="442" width="1" height="5" fill="#000"/><g transform="translate(75,436)"><path d="M3.5 2.5h7l2 2v9h-9z" fill="#f4f8fc" stroke="#8c8c8c"/>
<path d="M10.5 2.5v2h2" fill="#fff" stroke="#8c8c8c"/>
<rect x="5" y="5" width="3" height="1" fill="#4a8a9a"/>
<rect x="5" y="7" width="6" height="1" fill="#d080c0"/>
<rect x="5" y="9" width="6" height="1" fill="#803060"/>
<rect x="5" y="11" width="6" height="1" fill="#4a8090"/></g><rect x="64" y="460" width="1" height="1" fill="#8c8c8c"/><rect x="66" y="460" width="1" height="1" fill="#8c8c8c"/><rect x="68" y="460" width="1" height="1" fill="#8c8c8c"/><rect x="70" y="460" width="1" height="1" fill="#8c8c8c"/><rect x="72" y="460" width="1" height="1" fill="#8c8c8c"/><rect x="74" y="460" width="1" height="1" fill="#8c8c8c"/><g transform="translate(75,452)"><path d="M3.5 2.5h7l2 2v9h-9z" fill="#f4f8fc" stroke="#8c8c8c"/>
<path d="M10.5 2.5v2h2" fill="#fff" stroke="#8c8c8c"/>
<rect x="5" y="5" width="3" height="1" fill="#4a8a9a"/>
<rect x="5" y="7" width="6" height="1" fill="#d080c0"/>
<rect x="5" y="9" width="6" height="1" fill="#803060"/>
<rect x="5" y="11" width="6" height="1" fill="#4a8090"/></g><!-- title icon -->
<rect x="6" y="6" width="15" height="13" fill="#f4f8f4"/>
<rect x="7" y="9" width="6" height="8" fill="#3f8a80"/>
<rect x="7" y="9" width="6" height="1" fill="#306a70"/>
<rect x="18" y="9" width="1" height="4" fill="#303850"/>
<rect x="14" y="15" width="3" height="2" fill="#d8d0b8"/>
<!-- window buttons glyphs -->
<rect x="796" y="15" width="6" height="2" fill="#000"/>
<rect x="811" y="8.5" width="9" height="8" fill="none" stroke="#000" stroke-width="1"/>
<rect x="811" y="8" width="9" height="2" fill="#000"/>
<path d="M830.5 9.5 l7 6 M837.5 9.5 l-7 6" stroke="#000" stroke-width="1.7"/>
<!-- save -->
<path d="M19 57h13v14h-13z" fill="#686868"/>
<rect x="21" y="57" width="9" height="7" fill="#f4f4f4"/>
<rect x="22" y="59" width="7" height="1" fill="#b0b0b0"/>
<rect x="22" y="61" width="7" height="1" fill="#c0c0c0"/>
<rect x="22" y="66" width="7" height="5" fill="#d8d8d8"/>
<rect x="23" y="67" width="2" height="3" fill="#404040"/>
<!-- printer -->
<path d="M51.5 56.5h5l1.5 1.5v5h-6.5z" fill="#fff" stroke="#888"/>
<path d="M48 60.5h13q1 0 1 1v6q0 1-1 1h-13q-1 0-1-1v-6q0-1 1-1z" fill="#6c6c6c"/>
<rect x="48" y="61" width="13" height="2" fill="#3c3c5c"/>
<rect x="48" y="63" width="13" height="2" fill="#8a8aa0"/>
<rect x="48" y="65" width="13" height="2" fill="#98a098"/>
<rect x="48" y="67" width="13" height="1.5" fill="#4a6040"/>
<rect x="51.5" y="66.5" width="6" height="4" fill="#fff" stroke="#888"/>
<rect x="53" y="68" width="3" height="1" fill="#777"/>
<!-- undo -->
<path d="M76 59l0 9h8.5z" fill="#7a7a7a"/>
<path d="M79 63 Q81.5 60.3 86 60.4 Q89.4 61 89.4 64.5 Q89.3 67.3 87 68.5" fill="none" stroke="#7a7a7a" stroke-width="2.7"/>
<!-- redo -->
<path d="M114 59l0 9h-8.5z" fill="#7a7a7a"/>
<path d="M111 63 Q108.5 60.3 104 60.4 Q100.6 61 100.6 64.5 Q100.7 67.3 103 68.5" fill="none" stroke="#7a7a7a" stroke-width="2.7"/>
<!-- scissors -->
<path d="M132.5 57 L138 65.5 M141.5 57 L136 65.5" stroke="#909090" stroke-width="2.2"/>
<path d="M133 58 L137.5 65 M141 58 L136.5 65" stroke="#f0f0f0" stroke-width="0.7"/>
<ellipse cx="134.3" cy="68.3" rx="1.9" ry="2.2" fill="#f4f4f4" stroke="#4a4a4a" stroke-width="1.6"/>
<ellipse cx="139.7" cy="68.3" rx="1.9" ry="2.2" fill="#f4f4f4" stroke="#4a4a4a" stroke-width="1.6"/>
<!-- copy -->
<path d="M153.5 56.5h6l2.5 2.5v8.5h-8.5z" fill="#fcfcfc" stroke="#8a8a8a"/>
<path d="M157.5 60.5h6.5l2.5 2.5v8.5h-9z" fill="#fcfcfc" stroke="#8a8a8a"/>
<rect x="159" y="65" width="6" height="1" fill="#a0a0a0"/>
<rect x="159" y="68" width="6" height="1" fill="#a0a0a0"/>
<!-- paste -->
<rect x="177.5" y="57.5" width="11" height="13.5" fill="#e8b048" stroke="#b88020"/>
<rect x="179" y="58" width="8" height="2" fill="#a0b060"/>
<rect x="181" y="56" width="4" height="2" fill="#909090"/>
<path d="M181.5 60.5h6.5l2.5 2.5v8.5h-9z" fill="#fff" stroke="#8a8a8a"/>
<rect x="183" y="64" width="5" height="1" fill="#a0a0a0"/>
<rect x="183" y="66" width="6" height="1" fill="#a0a0a0"/>
<rect x="183" y="68" width="6" height="1" fill="#a0a0a0"/>
<!-- delete -->
<path d="M201 58 L215.5 71.5" stroke="#3c3c3c" stroke-width="1.8"/>
<path d="M213.5 59 L201.5 70.5" stroke="#3c3c3c" stroke-width="1.8"/>
<!-- find -->
<g id="mag">
<path d="M230 71 L235.5 65.5" stroke="#b07830" stroke-width="3.6" stroke-linecap="round"/><path d="M230 70.5 L235 65.5" stroke="#e0b060" stroke-width="1.2" stroke-linecap="round"/>
<path d="M235 66 L236.5 64.5" stroke="#303030" stroke-width="2"/>
<circle cx="239.3" cy="61.3" r="5" fill="#cdeefa" stroke="#98aabb" stroke-width="1"/>
</g>
<g transform="translate(24,0)"><path d="M230 71 L235.5 65.5" stroke="#b07830" stroke-width="3.6" stroke-linecap="round"/><path d="M230 70.5 L235 65.5" stroke="#e0b060" stroke-width="1.2" stroke-linecap="round"/>
<path d="M235 66 L236.5 64.5" stroke="#303030" stroke-width="2"/>
<circle cx="239.3" cy="61.3" r="5" fill="#cdeefa" stroke="#98aabb" stroke-width="1"/></g>
<path d="M260.5 61.5h5 M263.5 59.3 L265.8 61.5 L263.5 63.7" fill="none" stroke="#1e5a80" stroke-width="1.4"/>
<g transform="translate(48,0)"><path d="M230 71 L235.5 65.5" stroke="#b07830" stroke-width="3.6" stroke-linecap="round"/><path d="M230 70.5 L235 65.5" stroke="#e0b060" stroke-width="1.2" stroke-linecap="round"/>
<path d="M235 66 L236.5 64.5" stroke="#303030" stroke-width="2"/>
<circle cx="239.3" cy="61.3" r="5" fill="#cdeefa" stroke="#98aabb" stroke-width="1"/></g>
<path d="M285 63.5 Q286 59 290 59.5 M290 59.5 L289 58 M290 59.5 L288.5 60.5 M290 59.5 Q289 63.5 285 63.5" fill="none" stroke="#2a66d0" stroke-width="1.5"/>
<circle cx="287.3" cy="61.3" r="3.5" fill="#4a88e0" opacity="0.55"/>
<!-- refresh -->
<circle cx="314" cy="64" r="6.8" fill="#92e48e" stroke="#3c7c3c" stroke-width="1.3"/>
<path d="M311 63.5 Q311.5 60.5 315 60.5" fill="none" stroke="#0a5a10" stroke-width="1.6"/>
<path d="M317 64.5 Q316.5 67.5 313 67.5" fill="none" stroke="#0a5a10" stroke-width="1.6"/>
<path d="M314.5 58.5l2.5 2-2.5 2z M313.5 65.5l-2.5 2 2.5 2z" fill="#0a5a10"/>
<!-- blue list -->
<rect x="337" y="58" width="12" height="12" fill="#4a86c0"/>
<rect x="337" y="58" width="12" height="2" fill="#1e4e80"/>
<rect x="339" y="61" width="2" height="1" fill="#d8f4ff"/><rect x="342" y="61" width="5" height="1" fill="#d8f4ff"/>
<rect x="339" y="63" width="2" height="1" fill="#d8f4ff"/><rect x="342" y="63" width="5" height="1" fill="#d8f4ff"/>
<rect x="339" y="65" width="2" height="1" fill="#d8f4ff"/><rect x="342" y="65" width="5" height="1" fill="#d8f4ff"/>
<rect x="339" y="67" width="2" height="1" fill="#d8f4ff"/><rect x="342" y="67" width="5" height="1" fill="#d8f4ff"/>
<!-- doc down -->
<path d="M360.5 59.5h5l2 2v8h-7z" fill="#fff" stroke="#8a8a8a"/>
<path d="M371 62v7" stroke="#6a7890" stroke-width="1.4"/>
<path d="M368.5 66.5h5l-2.5 3.5z" fill="#6a7890"/>
<!-- green form -->
<path d="M385.5 56.5h10l2.5 2.5v12.5h-12.5z" fill="#fff" stroke="#8a8a8a"/>
<rect x="387" y="58" width="3" height="1" fill="#909090"/><rect x="391" y="58" width="3" height="1" fill="#909090"/>
<rect x="387" y="60" width="6" height="1" fill="#909090"/>
<rect x="386" y="62" width="12" height="8" fill="#4c9c3c"/>
<rect x="387" y="64" width="10" height="5" fill="#c4f0a8"/>
<rect x="388" y="65" width="6" height="1" fill="#306a20"/><rect x="388" y="67" width="6" height="1" fill="#306a20"/>
<rect x="395" y="65" width="1" height="1" fill="#306a20"/><rect x="395" y="67" width="1" height="1" fill="#306a20"/>
<!-- blue window doc -->
<rect x="407.5" y="57.5" width="13" height="13" fill="#fff" stroke="#2e5e9e"/>
<rect x="408" y="58" width="12" height="2" fill="#3a7ad0"/>
<path d="M410.5 61.5h5l2 2v8h-7z" fill="#fff" stroke="#8a8a8a"/>
<rect x="412" y="65" width="4" height="1" fill="#b0a0a0"/><rect x="412" y="67" width="4" height="1" fill="#b0a0a0"/>
<path d="M420.5 65v5.5" stroke="#6a7890" stroke-width="1.4"/>
<path d="M418.5 68.5h4l-2 3z" fill="#6a7890"/>
<!-- doc green arrow 10101 -->
<path d="M437.5 57.5h8l2 2v8.5h-10z" fill="#fff" stroke="#8a8a8a"/>
<rect x="439" y="62" width="5" height="1" fill="#a0a0a0"/><rect x="439" y="65" width="5" height="1" fill="#a0a0a0"/>
<path d="M444.5 61.5 Q448.5 62.5 448.5 66.5" fill="none" stroke="#3c9c30" stroke-width="1.8"/>
<path d="M446 66h5.5l-2.8 3z" fill="#3c9c30"/>
<rect x="437" y="69" width="1" height="3" fill="#111"/>
<path d="M440.5 69.2l1.3 1.3-1.3 1.3-1.3-1.3z" fill="#fff" stroke="#111" stroke-width="0.8"/>
<rect x="443.5" y="69" width="1" height="3" fill="#111"/>
<path d="M446.8 69.2l1.3 1.3-1.3 1.3-1.3-1.3z" fill="#fff" stroke="#111" stroke-width="0.8"/>
<rect x="450" y="69" width="1" height="3" fill="#111"/>
<!-- pressed icon 1 -->
<rect x="466.5" y="57.5" width="13" height="13" fill="#fff" stroke="#2e66b8"/>
<rect x="467" y="58" width="12" height="2" fill="#3a7ad0"/>
<rect x="467" y="60" width="3" height="10" fill="#b8d4f4"/>
<rect x="471" y="62" width="2" height="1" fill="#505050"/><rect x="474" y="62" width="2" height="1" fill="#806040"/>
<rect x="472" y="64" width="3" height="1" fill="#a08040"/>
<rect x="472" y="66" width="5" height="1" fill="#a08040"/>
<rect x="472" y="68" width="5" height="1" fill="#806040"/>
<!-- pressed icon 2 -->
<rect x="490.5" y="57.5" width="13" height="13" fill="#f4faff" stroke="#2e66b8"/>
<rect x="491" y="58" width="12" height="2" fill="#3a7ad0"/>
<rect x="492" y="61" width="2" height="1" fill="#405070"/>
<rect x="493" y="63" width="6" height="1" fill="#806040"/>
<rect x="493" y="65" width="5" height="1" fill="#806040"/>
<rect x="491" y="68" width="12" height="2" fill="#a8c8ec"/>
<!-- tools -->
<path d="M516 70 L526 60" stroke="#808080" stroke-width="2.6"/>
<path d="M516 70 L526 60" stroke="#e8e8e8" stroke-width="1"/>
<path d="M524 58.5 q3 -1 4.5 1.5 l-2 0.5 -1 1.5 1 1 q-2 1 -3.5 -1z" fill="#c0c0c0" stroke="#606060" stroke-width="0.7"/>
<path d="M518.5 61.5 L528 71" stroke="#b08830" stroke-width="2.6"/>
<path d="M514 61 L518 57.5 L521.5 59.5 L518.5 63 z" fill="#707070"/>
<!-- help -->
<circle cx="823" cy="63.8" r="7.6" fill="#2c6cb4" stroke="#173f7c" stroke-width="1.1"/>
<circle cx="822.3" cy="62.5" r="5" fill="#3c7cc4" opacity="0.6"/>
<path d="M821 61.3 q0.2 -2 2.1 -2 q2 0 2 1.8 q0 1.2 -1.2 1.9 q-0.8 0.5 -0.8 1.6" fill="none" stroke="#e8f4ff" stroke-width="1.7"/>
<rect x="822.2" y="66.3" width="2" height="2" fill="#e8f4ff"/>
<!-- scrollbar arrows -->
<path d="M818 126h7l-3.5-3.5z" fill="#000"/>
<path d="M818 486h7l-3.5 3.5z" fill="#000"/>
<path d="M265 500.5v7l-3.5-3.5z" fill="#000"/>
<path d="M804 500.5v7l3.5-3.5z" fill="#000"/>
</svg>
</body></html>
